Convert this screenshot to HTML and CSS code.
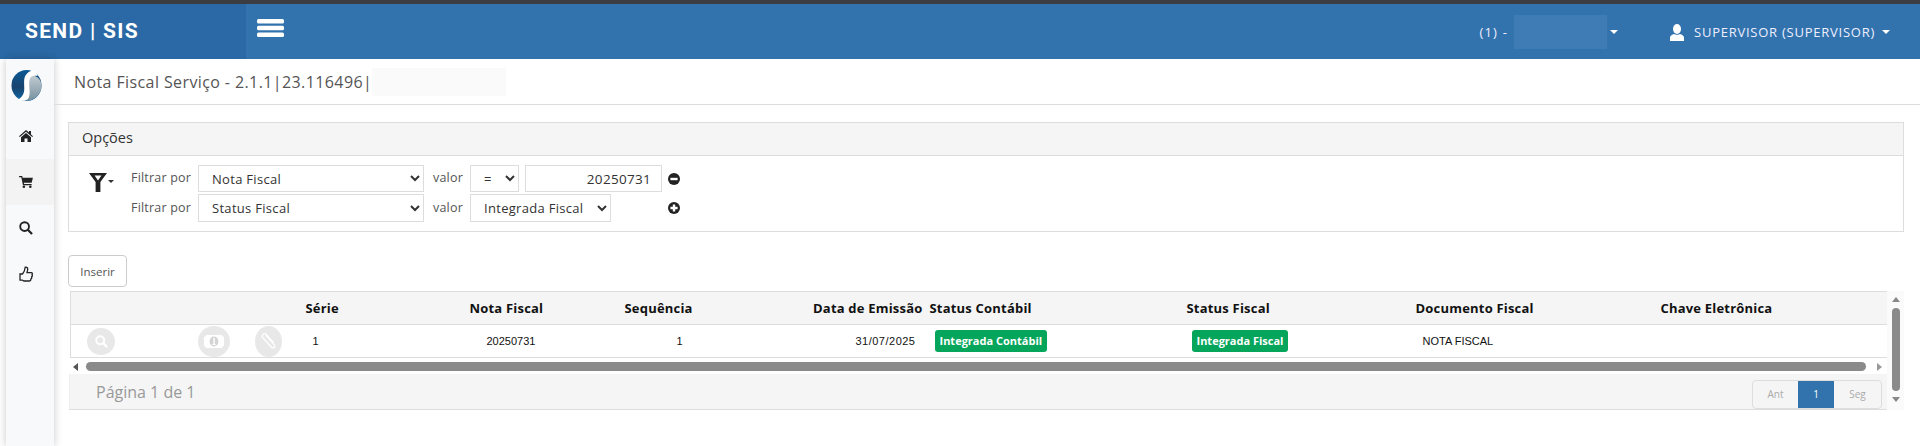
FILE: index.html
```html
<!DOCTYPE html>
<html lang="pt-BR">
<head>
  <meta charset="UTF-8" />
  <title>Nota Fiscal Serviço</title>
  <link rel="stylesheet" href="styles.css">
</head>
<body>

  <header class="topbar">
    <div class="brand">SEND | SIS</div>
    <div class="toggle">
      <svg width="27" height="18" viewBox="0 0 27 18"><rect y="0" width="27" height="4.6" rx="1.5"/><rect y="6.7" width="27" height="4.6" rx="1.5"/><rect y="13.4" width="27" height="4.6" rx="1.5"/></svg>
    </div>
    <div class="top-right">
      <div class="company">(1) -<span class="blur-top"></span><span class="caret"></span></div>
      <div class="user">
        <svg width="16" height="17" viewBox="0 0 16 17"><ellipse cx="8" cy="5" rx="4" ry="5"/><path d="M1 17V13.5C1 11.5 3.4 10.5 5 10C6 11 10 11 11 10C12.6 10.5 15 11.5 15 13.5V17Z"/></svg>
        <span>SUPERVISOR (SUPERVISOR)</span><span class="caret"></span>
      </div>
    </div>
  </header>

  <div class="layout">
    <aside class="sidebar">
      <div class="logo">
        <svg width="31" height="31" viewBox="0 0 31 32">
          <defs>
            <linearGradient id="lb" x1="0" y1="0" x2="0" y2="1"><stop offset="0" stop-color="#0c5a94"/><stop offset="0.55" stop-color="#17436f"/><stop offset="1" stop-color="#0f6aa6"/></linearGradient>
            <linearGradient id="lg" x1="0" y1="0" x2="0" y2="1"><stop offset="0" stop-color="#c3ccd2"/><stop offset="1" stop-color="#76909f"/></linearGradient>
          </defs>
          <ellipse cx="15.5" cy="16" rx="15.5" ry="16" fill="url(#lb)"/>
          <path d="M16 6C20 4 31 6 31 16C31 26 22 32 15 32C20 27 18 12 16 6Z" fill="url(#lg)"/>
          <path d="M24 0C17 1 13 5 13 12C13 20 15 26 6 31C12 33 17 31 18 28C20 22 17 14 19 9C20 6 23 6 27 6Z" fill="#fff"/>
        </svg>
      </div>
      <a class="side-item">
        <svg width="14" height="12" viewBox="0 0 14 12"><path d="M7 0L10 2.6V1H12V4.4L14 6.2L13.2 7L7 1.7L.8 7L0 6.2Z"/><path d="M7 3L12 7.2V12H8.5V8.5H5.5V12H2V7.2Z"/></svg>
      </a>
      <a class="side-item active">
        <svg width="14" height="12" viewBox="0 0 15 13"><path d="M0 0H3.4L3.9 2H15L13.6 7.4H5.2L5.5 8.6H13.6V10H4.2L2.4 1.4H0Z"/><circle cx="5.2" cy="11.6" r="1.4"/><circle cx="12.2" cy="11.6" r="1.4"/></svg>
      </a>
      <a class="side-item">
        <svg width="14" height="14" viewBox="0 0 15 15"><circle cx="6" cy="6" r="4.7" fill="none" stroke="#222" stroke-width="2"/><path d="M9.4 9.4L14 14" stroke="#222" stroke-width="2.4" fill="none"/></svg>
      </a>
      <a class="side-item">
        <svg width="14" height="16" viewBox="0 0 14 16"><path d="M1 8H3.5C5 6 6 4 6.2 1.2C8 .8 9 2 8.6 4.2L8 6.6H12.4C13.4 6.6 13.6 7.8 13 8.6C13.6 9.4 13.4 10.4 12.6 10.8C13 11.8 12.6 12.6 11.8 13C12 14 11.4 15 10.2 15H5L3.4 14.2H1Z" fill="none" stroke="#222" stroke-width="1.3"/></svg>
      </a>
    </aside>

    <main class="content">
      <div class="page-title">
        <h1>Nota Fiscal Serviço - 2.1.1|23.116496|</h1>
        <span class="blur-title"></span>
      </div>

      <section class="panel">
        <div class="panel-heading">Opções</div>
        <div class="panel-body">
          <div class="filter-btn">
            <svg width="18" height="19" viewBox="0 0 18 19"><path d="M0 0H18L11.4 9V19H6.6V9ZM5.6 2.6L9 7.4L12.4 2.6Z" fill-rule="evenodd"/></svg>
            <span class="caret dark"></span>
          </div>
          <div class="filters">
            <label>Filtrar por</label>
            <select class="field"><option>Nota Fiscal</option></select>
            <label class="valor">valor</label>
            <div class="value-cell">
              <select class="field op"><option>=</option></select>
              <input class="field number" type="text" value="20250731">
              <svg class="sign" width="12" height="12" viewBox="0 0 12 12"><circle cx="6" cy="6" r="6"/><rect x="2.4" y="4.8" width="7.2" height="2.4" fill="#fff"/></svg>
            </div>
            <label>Filtrar por</label>
            <select class="field"><option>Status Fiscal</option></select>
            <label class="valor">valor</label>
            <div class="value-cell">
              <select class="field status"><option>Integrada Fiscal</option></select>
              <svg class="sign push" width="12" height="12" viewBox="0 0 12 12"><circle cx="6" cy="6" r="6"/><path d="M2.4 4.8H4.8V2.4H7.2V4.8H9.6V7.2H7.2V9.6H4.8V7.2H2.4Z" fill="#fff"/></svg>
            </div>
          </div>
        </div>
      </section>

      <button class="btn-insert">Inserir</button>

      <section class="grid">
        <div class="grid-main">
          <table>
            <colgroup>
              <col class="c-icons"><col class="c-serie"><col class="c-nota"><col class="c-seq"><col class="c-data">
              <col class="c-cont"><col class="c-fisc"><col class="c-doc"><col>
            </colgroup>
            <thead>
              <tr>
                <th></th><th>Série</th><th>Nota Fiscal</th><th>Sequência</th><th class="h-data">Data de Emissão</th>
                <th>Status Contábil</th><th>Status Fiscal</th><th>Documento Fiscal</th><th>Chave Eletrônica</th>
              </tr>
            </thead>
            <tbody>
              <tr>
                <td>
                  <div class="row-icons">
                    <span class="round r-search">
                      <svg width="13" height="13" viewBox="0 0 15 15"><circle cx="6" cy="6" r="4.6" fill="none" stroke="#fff" stroke-width="2.2"/><path d="M9.4 9.4L14 14" stroke="#fff" stroke-width="2.6"/></svg>
                    </span>
                    <span class="round r-money">
                      <svg width="20" height="13" viewBox="0 0 20 13"><path d="M2 0H18C18 1.2 19 2 20 2V11C19 11 18 11.8 18 13H2C2 11.8 1 11 0 11V2C1 2 2 1.2 2 0Z" fill="#fff"/><ellipse cx="10" cy="6.5" rx="4.4" ry="5" fill="#d4d4d4"/><path d="M9 3.4L10.8 2.8V9.2H12V10H8V9.2H9.4V4.2L9 4.4Z" fill="#fff"/></svg>
                    </span>
                    <span class="round r-clip">
                      <svg width="18" height="18" viewBox="0 0 18 18"><path d="M5.5 3.5L14 13C15.8 15.2 12.8 17.4 11 15.4L2.6 6C.8 3.8 3.8 .6 6 2.8L13.4 11" transform="translate(.2 -.4)" fill="none" stroke="#fff" stroke-width="1.3"/></svg>
                    </span>
                  </div>
                </td>
                <td class="v-serie">1</td>
                <td class="v-nota">20250731</td>
                <td class="v-seq">1</td>
                <td class="v-data">31/07/2025</td>
                <td class="v-badge"><span class="badge">Integrada Contábil</span></td>
                <td class="v-badge"><span class="badge">Integrada Fiscal</span></td>
                <td class="v-doc">NOTA FISCAL</td>
                <td></td>
              </tr>
            </tbody>
          </table>
          <div class="hscroll">
            <span class="arrow-left"></span>
            <span class="hthumb"></span>
            <span class="arrow-right"></span>
          </div>
          <div class="grid-footer">
            <span class="page-info">Página 1 de 1</span>
            <div class="pager">
              <a>Ant</a><a class="current">1</a><a>Seg</a>
            </div>
          </div>
        </div>
        <div class="vscroll">
          <span class="arrow-up"></span>
          <span class="vthumb"></span>
          <span class="arrow-down"></span>
        </div>
      </section>
    </main>
  </div>

</body>
</html>
```

FILE: styles.css
```css
* { margin: 0; padding: 0; box-sizing: border-box; }

html, body { height: 446px; overflow: hidden; }

body {
  font-family: 'Open Sans', sans-serif;
  font-size: 12px;
  color: #333;
  background: #fff;
}

/* top bar */
.topbar {
  display: flex;
  height: 59px;
  background: #3273ae;
  border-top: 4px solid #3b3d40;
  color: #fff;
}

.brand {
  width: 246px;
  background: #2a69a5;
  padding: 15px 0 0 25px;
  font-family: 'Liberation Sans Narrow', 'Roboto', sans-serif;
  font-size: 21px;
  font-weight: 700;
  letter-spacing: 1.3px;
  line-height: 24px;
}

.toggle {
  padding: 15px 0 0 11px;
}

.toggle svg { fill: #fff; display: block; }

.top-right {
  margin-left: auto;
  display: flex;
  align-items: flex-start;
  padding-right: 30px;
}

.company {
  display: flex;
  align-items: center;
  height: 34px;
  margin-top: 11px;
  font-size: 13px;
  letter-spacing: 1.2px;
  color: #eef;
}

.blur-top {
  width: 93px;
  height: 34px;
  margin-left: 6px;
  background: #3f7cb5;
}

.caret {
  display: inline-block;
  width: 0;
  height: 0;
  margin-left: 3px;
  border-left: 4px solid transparent;
  border-right: 4px solid transparent;
  border-top: 4px solid #fff;
}

.caret.dark {
  border-top-color: #333;
  border-width: 3.5px 3.5px 0;
  margin: 0 0 0 1px;
}

.user {
  display: flex;
  align-items: center;
  height: 34px;
  margin: 11px 0 0 51px;
  gap: 9px;
  font-size: 13px;
  letter-spacing: 0.75px;
  color: #eef;
}

.user svg { fill: #fff; }
.user .caret { margin-left: -2px; }

/* layout */
.layout {
  display: flex;
  height: 387px;
}

.sidebar {
  width: 48px;
  margin-left: 6px;
  background: #f8f9fb;
  box-shadow: 0 0 8px rgba(0, 0, 0, 0.22);
  flex-shrink: 0;
}

.logo {
  display: flex;
  justify-content: center;
  padding-top: 11px;
  height: 54px;
}

.logo svg { margin-right: 7px; }

.side-item {
  display: flex;
  justify-content: center;
  align-items: center;
  height: 46px;
}

.side-item svg { fill: #222; margin-right: 8px; }
.side-item.active { background: #f3f3f3; }

.content {
  flex: 1;
  min-width: 0;
}

.page-title {
  display: flex;
  align-items: center;
  height: 46px;
  padding-left: 20px;
  border-bottom: 1px solid #ddd;
}

.page-title h1 {
  font-size: 16px;
  font-weight: 400;
  letter-spacing: 0.4px;
  color: #555;
}

.blur-title {
  width: 134px;
  height: 28px;
  background: #fafafa;
}

/* options panel */
.panel {
  margin: 17px 16px 0 14px;
  height: 110px;
  border: 1px solid #ddd;
}

.panel-heading {
  height: 33px;
  padding: 0 13px;
  line-height: 29px;
  font-size: 14.5px;
  background: #f5f5f5;
  border-bottom: 1px solid #ddd;
}

.panel-body {
  display: flex;
  padding: 9px 0 0 20px;
}

.filter-btn {
  width: 42px;
  padding-top: 8px;
  display: flex;
  align-items: flex-start;
}

.filter-btn svg { fill: #222; }
.filter-btn .caret { margin-top: 7px; }

.filters {
  display: grid;
  grid-template-columns: 67px 226px 46px 192px;
  grid-template-rows: 27px 28px;
  row-gap: 2px;
  align-items: center;
}

.filters label {
  font-size: 12.5px;
  letter-spacing: 0.2px;
  color: #555;
  padding-bottom: 2px;
}

.filters label.valor { padding-left: 9px; }

.filters select.field { width: 226px; }
.filters select.op { width: 49px; }
.filters select.status { width: 141px; }

.value-cell {
  display: flex;
  align-items: center;
  height: 100%;
  gap: 6px;
  width: 210px;
}

.field {
  height: 100%;
  border: 1px solid #ddd;
  background: #fff;
  font-family: 'Open Sans', sans-serif;
  font-size: 13px;
  letter-spacing: 0.3px;
  color: #333;
  padding-left: 9px;
  border-radius: 0;
}

.number { width: 137px; text-align: right; padding-right: 10px; font-size: 13.5px; }
.sign { fill: #222; flex-shrink: 0; }
.sign.push { margin-left: auto; margin-right: 0; }

/* insert button */
.btn-insert {
  display: block;
  width: 59px;
  height: 32px;
  margin: 23px 0 0 14px;
  border: 1px solid #ccc;
  border-radius: 4px;
  background: #fff;
  font-family: 'Open Sans', sans-serif;
  font-size: 11.5px;
  color: #555;
}

/* data grid */
.grid {
  display: flex;
  margin: 4px 16px 0 16px;
}

.grid-main {
  width: 1817px;
}

table {
  width: 100%;
  table-layout: fixed;
  border-collapse: collapse;
  border-left: 1px solid #ddd;
}

.c-icons { width: 235px; }
.c-serie { width: 164px; }
.c-nota { width: 155px; }
.c-seq { width: 76px; }
.c-data { width: 229px; }
.c-cont { width: 257px; }
.c-fisc { width: 229px; }
.c-doc { width: 245px; }

th {
  height: 33px;
  background: #f5f5f5;
  border-top: 1px solid #ddd;
  border-bottom: 1px solid #ddd;
  font-size: 13px;
  font-weight: 700;
  letter-spacing: 0.2px;
  color: #111;
  text-align: left;
  white-space: nowrap;
}

.h-data { text-align: right; padding-right: 7px; }

td {
  height: 33px;
  border-bottom: 1px solid #ddd;
  font-family: 'Liberation Sans', sans-serif;
  font-size: 11px;
  color: #111;
  white-space: nowrap;
}

.v-serie { padding-left: 7px; }
.v-nota { padding-left: 17px; }
.v-seq { padding-left: 52px; }
.v-data { text-align: right; padding-right: 14px; letter-spacing: 0.5px; }
.v-badge { padding-left: 5px; }
.v-doc { padding-left: 7px; }

.row-icons {
  display: flex;
  align-items: center;
  padding-left: 16px;
}

.round {
  display: flex;
  align-items: center;
  justify-content: center;
  background: #e8e8e8;
  border-radius: 50%;
  height: 31px;
  flex-shrink: 0;
}

.r-search { width: 28px; height: 27px; }
.r-money { width: 32px; margin-left: 83px; }
.r-clip { width: 27px; margin-left: 25px; }

.badge {
  display: inline-block;
  padding: 0 5px;
  height: 22px;
  line-height: 22px;
  background: #05a65b;
  border-radius: 3px;
  font-family: 'Open Sans', sans-serif;
  font-size: 11px;
  font-weight: 700;
  color: #fff;
}

.hscroll {
  display: flex;
  align-items: center;
  height: 16px;
  padding-top: 1px;
}

.hthumb {
  width: 1780px;
  height: 9px;
  margin: 0 8px 0 8px;
  background: #8a8a8a;
  border-radius: 5px;
}

.arrow-left, .arrow-right, .arrow-up, .arrow-down {
  width: 0;
  height: 0;
  border-style: solid;
  flex-shrink: 0;
}

.arrow-left {
  margin-left: 3px;
  border-width: 4.5px 5px 4.5px 0;
  border-color: transparent #555 transparent transparent;
}

.arrow-right {
  border-width: 4.5px 0 4.5px 5px;
  border-color: transparent transparent transparent #999;
  margin-left: 3px;
}

.grid-footer {
  display: flex;
  justify-content: space-between;
  height: 36px;
  margin-left: -1px;
  margin-right: -1px;
  padding: 6px 5px 0 26px;
  background: #f5f5f5;
  border-bottom: 1px solid #ddd;
  border-right: 1px solid #ddd;
  border-left: 1px solid #eee;
}

.page-info {
  font-size: 16px;
  line-height: 24px;
  color: #999;
}

.pager {
  display: flex;
  height: 29px;
  border: 1px solid #ddd;
  border-radius: 4px;
  overflow: hidden;
  font-size: 10px;
  line-height: 27px;
  color: #aaa;
  text-align: center;
}

.pager a { width: 47px; }
.pager a:first-child { width: 45px; }
.pager a.current {
  width: 36px;
  background: #3273ae;
  color: #fff;
}

.vscroll {
  display: flex;
  flex-direction: column;
  align-items: center;
  width: 17px;
  height: 119px;
  padding-top: 6px;
  background: #fafafa;
}

.vthumb {
  width: 8px;
  height: 83px;
  margin: 6px 0 6px;
  background: #8a8a8a;
  border-radius: 4px;
}

.arrow-up {
  border-width: 0 4.5px 5px;
  border-color: transparent transparent #888;
}

.arrow-down {
  border-width: 5px 4.5px 0;
  border-color: #888 transparent transparent;
}
```
